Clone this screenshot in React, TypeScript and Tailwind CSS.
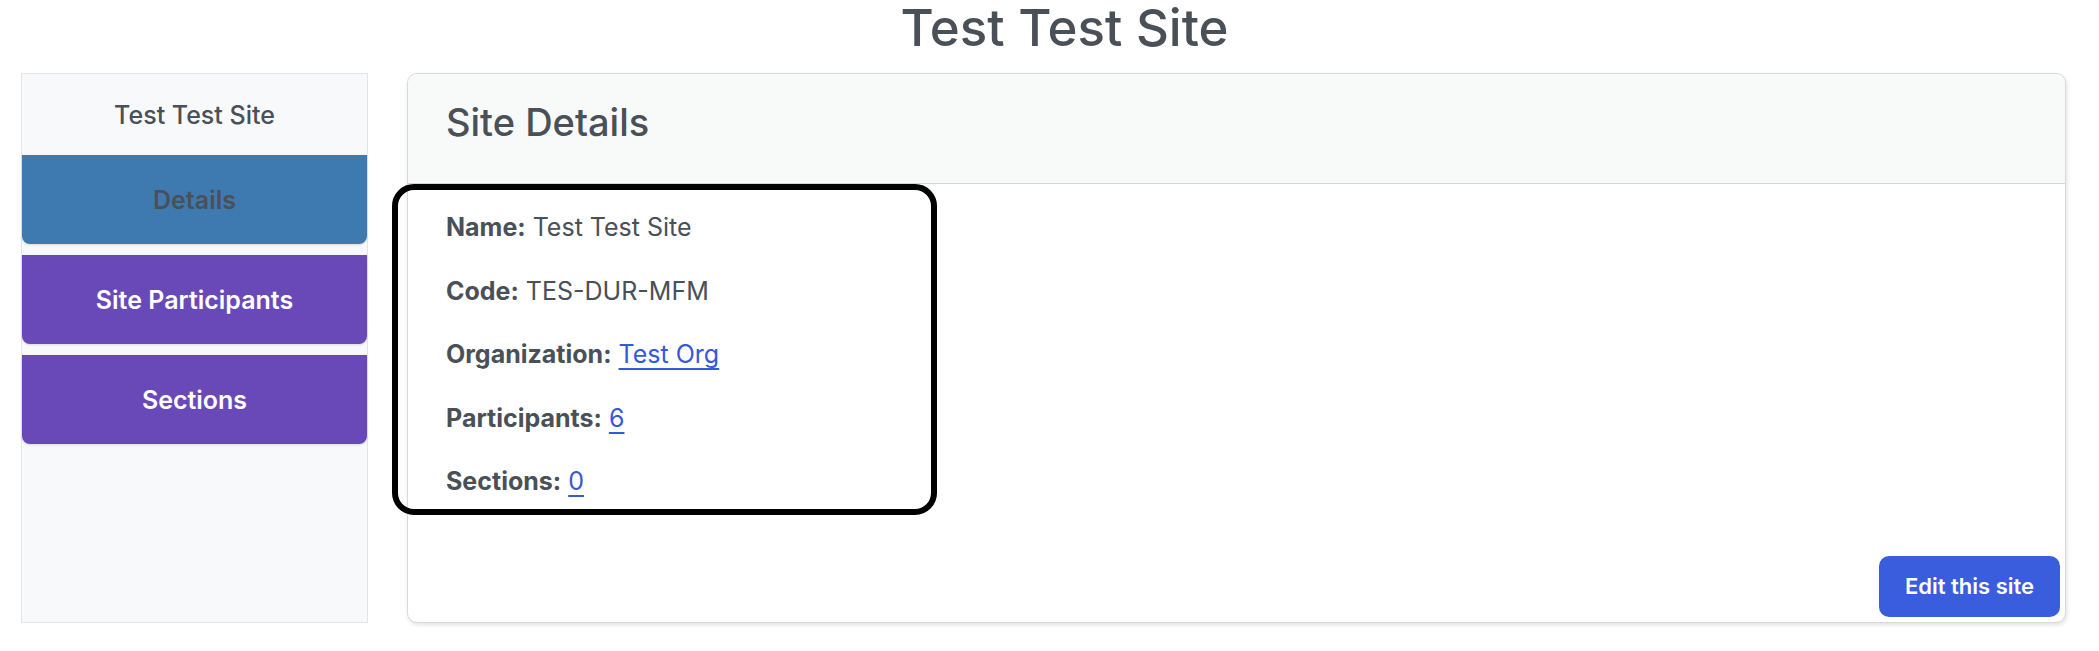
const navItems = [
  { label: 'Details', active: true },
  { label: 'Site Participants', active: false },
  { label: 'Sections', active: false },
]

const details: { label: string; value: string; link?: boolean }[] = [
  { label: 'Name:', value: 'Test Test Site' },
  { label: 'Code:', value: 'TES-DUR-MFM' },
  { label: 'Organization:', value: 'Test Org', link: true },
  { label: 'Participants:', value: '6', link: true },
  { label: 'Sections:', value: '0', link: true },
]

export const SiteDetailsPage = () => {
  return (
    <div className="min-h-[651px] bg-white font-['Inter',sans-serif] text-[#495057]">
      <h1 className="h-[73px] pl-[30px] text-center text-[51px] font-medium leading-[56px]">Test Test Site</h1>
      <div className="flex gap-[39px] pl-[21px] pr-[33px]">
        {/* sidebar */}
        <aside className="flex h-[550px] w-[347px] flex-col border border-[#e3e4e6] bg-[#f8f9fa]">
          <div className="pt-[23px] pb-[20px] text-center text-[25px] font-medium leading-[37.5px]">
            Test Test Site
          </div>
          <nav className="flex flex-col gap-[11px]">
            {navItems.map((item) => (
              <a
                key={item.label}
                href="#"
                className={
                  item.active
                    ? 'flex h-[89px] items-center justify-center rounded-b-[8px] bg-[#3e7ab0] pt-[3px] text-[25px] font-semibold text-[#4a5058] shadow-sm'
                    : 'flex h-[89px] items-center justify-center rounded-b-[8px] bg-[#6849b7] pt-[3px] text-[25px] font-semibold text-white shadow-sm'
                }
              >
                {item.label}
              </a>
            ))}
          </nav>
        </aside>

        {/* main card */}
        <section className="relative flex h-[550px] flex-1 flex-col rounded-[10px] border border-[#d8d9da] bg-white shadow-[1px_2px_4px_rgba(0,0,0,0.12)]">
          <header className="h-[110px] rounded-t-[10px] border-b border-[#d4d5d6] bg-[#f8f9f9] pt-[25px] pl-[38px]">
            <h2 className="text-[38px] font-medium leading-[46px]">Site Details</h2>
          </header>
          <div className="flex flex-1 flex-col pt-[25px] pl-[38px] pr-[5px] pb-[5px]">
            <div className="flex flex-col gap-[26px] text-[25px] leading-[37.5px]">
              {details.map((row) => (
                <p key={row.label}>
                  <span className="font-bold">{row.label}</span>{' '}
                  {row.link ? (
                    <a href="#" className="text-[#3758d9] underline underline-offset-[5px]">
                      {row.value}
                    </a>
                  ) : (
                    <span>{row.value}</span>
                  )}
                </p>
              ))}
            </div>
            <button
              type="button"
              className="mt-auto self-end h-[61px] w-[181px] rounded-[10px] bg-[#3a5ddd] text-[22px] font-semibold text-white"
            >
              Edit this site
            </button>
          </div>
          {/* highlight outline drawn over the details */}
          <div className="pointer-events-none absolute left-[-16px] top-[110px] h-[331px] w-[545px] rounded-[22px] border-[6px] border-black" />
        </section>
      </div>
    </div>
  )
}

export default function App() {
  return <SiteDetailsPage />
}
